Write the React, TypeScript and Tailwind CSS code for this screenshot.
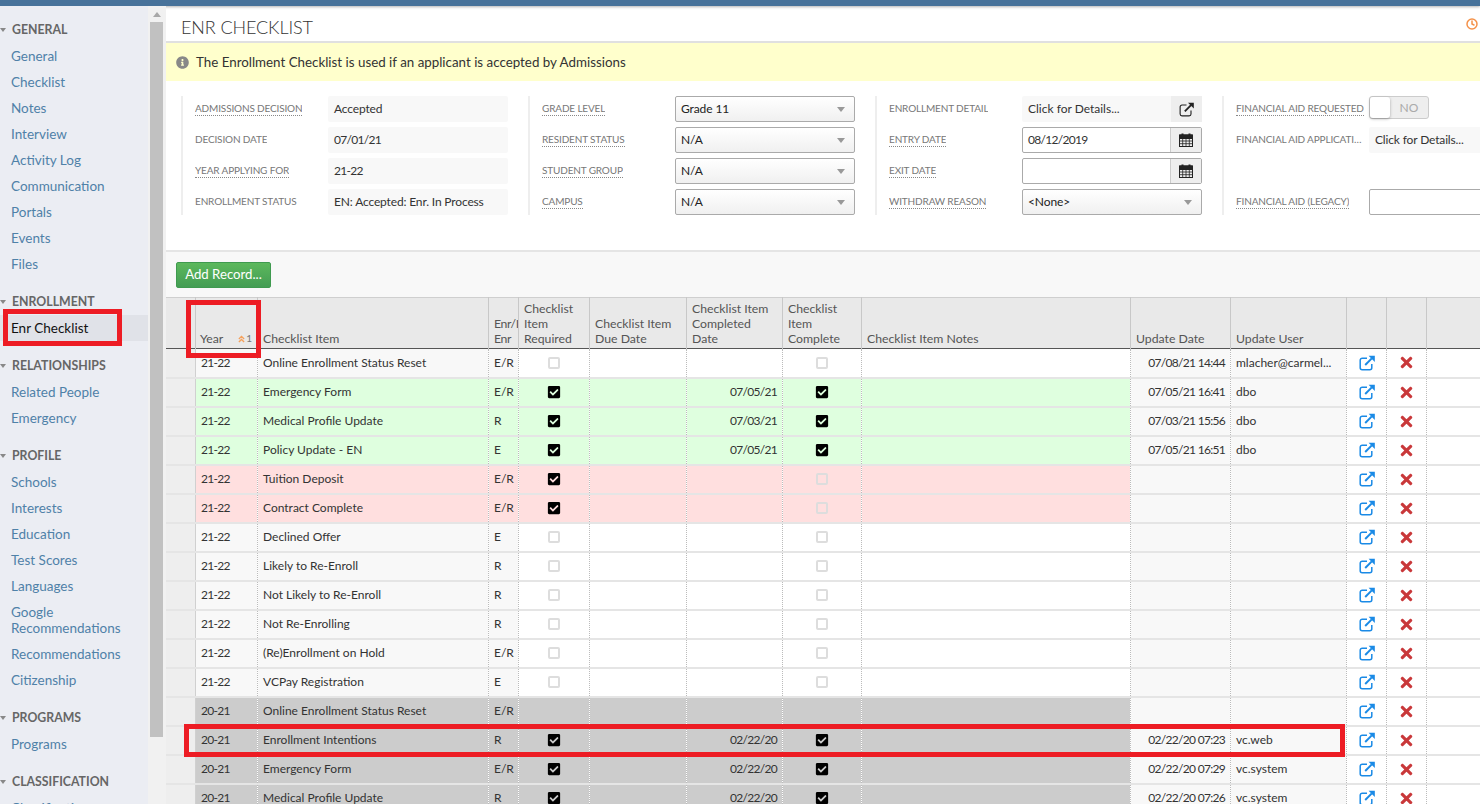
import { FaCheckSquare, FaInfoCircle, FaTimes } from "react-icons/fa";
import { Clock } from "lucide-react";

const font = "font-['Lato','Noto_Sans',sans-serif]";

const groups: { title: string; items: string[] }[] = [
  { title: "GENERAL", items: ["General", "Checklist", "Notes", "Interview", "Activity Log", "Communication", "Portals", "Events", "Files"] },
  { title: "ENROLLMENT", items: ["Enr Checklist"] },
  { title: "RELATIONSHIPS", items: ["Related People", "Emergency"] },
  { title: "PROFILE", items: ["Schools", "Interests", "Education", "Test Scores", "Languages", "Google Recommendations", "Recommendations", "Citizenship"] },
  { title: "PROGRAMS", items: ["Programs"] },
  { title: "CLASSIFICATION", items: ["Classification"] },
];

type Row = { y: string; item: string; e: string; req: 0 | 1 | 2; cd: string; comp: 0 | 1 | 2; ud: string; uu: string; bg: string };
const W = "bg-white", G = "bg-[#dfffdf]", R = "bg-[#ffdfdf]", D = "bg-[#cccccc]";
const rows: Row[] = [
  { y: "21-22", item: "Online Enrollment Status Reset", e: "E/R", req: 1, cd: "", comp: 1, ud: "07/08/21 14:44", uu: "mlacher@carmel...", bg: W },
  { y: "21-22", item: "Emergency Form", e: "E/R", req: 2, cd: "07/05/21", comp: 2, ud: "07/05/21 16:41", uu: "dbo", bg: G },
  { y: "21-22", item: "Medical Profile Update", e: "R", req: 2, cd: "07/03/21", comp: 2, ud: "07/03/21 15:56", uu: "dbo", bg: G },
  { y: "21-22", item: "Policy Update - EN", e: "E", req: 2, cd: "07/05/21", comp: 2, ud: "07/05/21 16:51", uu: "dbo", bg: G },
  { y: "21-22", item: "Tuition Deposit", e: "E/R", req: 2, cd: "", comp: 1, ud: "", uu: "", bg: R },
  { y: "21-22", item: "Contract Complete", e: "E/R", req: 2, cd: "", comp: 1, ud: "", uu: "", bg: R },
  { y: "21-22", item: "Declined Offer", e: "E", req: 1, cd: "", comp: 1, ud: "", uu: "", bg: W },
  { y: "21-22", item: "Likely to Re-Enroll", e: "R", req: 1, cd: "", comp: 1, ud: "", uu: "", bg: W },
  { y: "21-22", item: "Not Likely to Re-Enroll", e: "R", req: 1, cd: "", comp: 1, ud: "", uu: "", bg: W },
  { y: "21-22", item: "Not Re-Enrolling", e: "R", req: 1, cd: "", comp: 1, ud: "", uu: "", bg: W },
  { y: "21-22", item: "(Re)Enrollment on Hold", e: "E/R", req: 1, cd: "", comp: 1, ud: "", uu: "", bg: W },
  { y: "21-22", item: "VCPay Registration", e: "E", req: 1, cd: "", comp: 1, ud: "", uu: "", bg: W },
  { y: "20-21", item: "Online Enrollment Status Reset", e: "E/R", req: 0, cd: "", comp: 0, ud: "", uu: "", bg: D },
  { y: "20-21", item: "Enrollment Intentions", e: "R", req: 2, cd: "02/22/20", comp: 2, ud: "02/22/20 07:23", uu: "vc.web", bg: D },
  { y: "20-21", item: "Emergency Form", e: "E/R", req: 2, cd: "02/22/20", comp: 2, ud: "02/22/20 07:29", uu: "vc.system", bg: D },
  { y: "20-21", item: "Medical Profile Update", e: "R", req: 2, cd: "02/22/20", comp: 2, ud: "02/22/20 07:26", uu: "vc.system", bg: D },
];

function ExtIcon({ className, box = 1.5 }: { className: string; box?: number }) {
  return (
    <svg viewBox="0 0 16 16" className={className} fill="none" stroke="currentColor">
      <path d="M8 3.2H3.2A2 2 0 0 0 1.2 5.2v7.6a2 2 0 0 0 2 2h7.6a2 2 0 0 0 2-2V9" strokeWidth={box} />
      <path d="M6.2 10 12.8 3.4" strokeWidth={2} />
      <path d="M9.6 0.8H15.8V7Z" fill="currentColor" stroke="none" />
    </svg>
  );
}

function CalIcon() {
  return (
    <svg viewBox="0 0 14 14" className="h-[14px] w-[14px] text-[#222]" fill="none" stroke="currentColor">
      <path d="M0.5 2h13v3.5H0.5Z" fill="currentColor" strokeWidth={1} />
      <rect x="0.5" y="2" width="13" height="11.5" strokeWidth={1} />
      <path d="M0.5 8h13M0.5 10.7h13M3.7 5v8.5M7 5v8.5M10.3 5v8.5" strokeWidth={0.8} />
      <path d="M3.5 0.5v2.5M10.5 0.5v2.5" strokeWidth={2} />
    </svg>
  );
}

function Caret() {
  return <span className="h-0 w-0 border-x-[4.5px] border-t-[5px] border-x-transparent border-t-[#999]" />;
}

function Check({ v }: { v: 0 | 1 | 2 }) {
  if (v === 0) return null;
  if (v === 2) return <FaCheckSquare className="mx-auto text-[14px] text-black" />;
  return <span className="mx-auto block h-[12px] w-[12px] rounded-[2px] border-2 border-[#dddddd]" />;
}

function Label({ text, dotted }: { text: string; dotted?: boolean }) {
  return (
    <div className="flex w-[133px] shrink-0 items-center pb-[2px]">
      <span className={`max-w-[129px] truncate text-[10px] leading-[14px] tracking-[-0.15px] text-[#777] ${dotted ? "border-b border-dotted border-[#888]" : ""}`}>{text}</span>
    </div>
  );
}

function ReadOnly({ text, digits }: { text: string; digits?: boolean }) {
  return <div className={`flex h-[26px] w-[180px] shrink-0 items-center rounded-[2px] bg-[#f8f8f8] px-[6px] text-[12px] text-[#333] ${digits ? "tracking-[-0.7px]" : "tracking-[-0.15px]"}`}>{text}</div>;
}

function Select({ text }: { text: string }) {
  return (
    <div className="flex h-[26px] w-[180px] shrink-0 items-center justify-between rounded-[2px] border border-[#aaa] bg-gradient-to-b from-white to-[#f0f0f0] pl-[5px] pr-[9px] text-[12px] tracking-[-0.1px] text-[#222]">
      <span>{text}</span>
      <Caret />
    </div>
  );
}

function DateBox({ text }: { text: string }) {
  return (
    <div className="flex h-[26px] w-[180px] shrink-0 items-center rounded-[2px] border border-[#aaa] bg-white text-[12px] tracking-[-0.7px] text-[#333]">
      <span className="flex-1 pl-[5px]">{text}</span>
      <span className="flex h-full w-[31px] items-center justify-center border-l border-[#ccc] bg-[#eeeeee]">
        <CalIcon />
      </span>
    </div>
  );
}

function Column({ children }: { children: React.ReactNode }) {
  return <div className="flex w-[327px] shrink-0 flex-col gap-[5px] border-l-2 border-[#eeeeee] pl-[12px]">{children}</div>;
}

function FormRow({ children }: { children: React.ReactNode }) {
  return <div className="flex h-[26px]">{children}</div>;
}

const cols = [29.5, 62, 231, 30, 71, 97, 96, 79, 269, 100, 116, 40, 40, 53.5];

function Th({ children, className = "" }: { children?: React.ReactNode; className?: string }) {
  return <th className={`border-r border-[#c8c8c8] px-[5px] pb-[2px] align-bottom text-left text-[12.25px] font-normal leading-[15px] text-[#555] ${className}`}>{children}</th>;
}

const td = "border-r border-dotted border-[#bbb] px-[5px] text-[12px] text-[#333] whitespace-nowrap overflow-hidden";
const digits = "tracking-[-0.7px]";

export default function App() {
  return (
    <div className={`${font} relative h-[804px] w-[1480px] overflow-hidden bg-white`}>
      <div className="h-[6px] bg-[#47729a] shadow-[0_1px_3px_rgba(0,0,0,0.3)]" />
      <div className="flex h-[798px]">
        <aside className="h-full w-[148px] shrink-0 overflow-hidden bg-[#ebedf3] pt-[16px]">
          {groups.map((g) => (
            <div key={g.title} className="mb-[17px]">
              <div className="flex h-[16px] items-center text-[12.3px] font-bold leading-[16px] text-[#666]">
                <span className="mr-[6px] h-0 w-0 border-x-[3.5px] border-t-[4px] border-x-transparent border-t-[#888]" />
                <span>{g.title}</span>
              </div>
              <div className="mt-[5px]">
                {g.items.map((it) => {
                  const active = it === "Enr Checklist";
                  return (
                    <div key={it} className={`py-[5px] pl-[11px] pr-[6px] text-[13.5px] leading-[16px] ${active ? "bg-[#e0e2e8] text-[#111]" : "text-[#4f81a8]"}`}>
                      {it}
                    </div>
                  );
                })}
              </div>
            </div>
          ))}
        </aside>
        <div className="flex h-full w-[18px] shrink-0 flex-col bg-[#f1f1f1] pr-[3px] pl-[2px]">
          <div className="flex h-[16px] items-center justify-center">
            <span className="h-0 w-0 border-x-[4px] border-b-[5px] border-x-transparent border-b-[#a8a8a8]" />
          </div>
          <div className="h-[715px] bg-[#c1c1c1]" />
        </div>
        <main className="flex h-full min-w-0 flex-1 flex-col overflow-hidden">
          <div className="relative flex h-[35px] shrink-0 items-center pl-[15px] pt-[8px] text-[18px] font-light tracking-[-0.1px] text-[#333]">
            ENR CHECKLIST
            <Clock className="absolute right-[2px] top-[12px] h-[12px] w-[12px] text-[#f5924a]" strokeWidth={3} />
          </div>
          <div className="h-[2px] shrink-0 bg-[#e0e0e0]" />
          <div className="flex h-[38px] shrink-0 items-center gap-[7px] bg-[#ffffcc] pl-[10px] pt-[1px] text-[13.35px] text-[#333]">
            <FaInfoCircle className="text-[13px] text-[#888]" />
            <span>The Enrollment Checklist is used if an applicant is accepted by Admissions</span>
          </div>
          <div className="flex h-[169px] shrink-0 items-start gap-[20px] overflow-hidden pl-[15px] pt-[15px]">
            <Column>
              <FormRow><Label text="ADMISSIONS DECISION" dotted /><ReadOnly text="Accepted" /></FormRow>
              <FormRow><Label text="DECISION DATE" /><ReadOnly text="07/01/21" digits /></FormRow>
              <FormRow><Label text="YEAR APPLYING FOR" dotted /><ReadOnly text="21-22" digits /></FormRow>
              <FormRow><Label text="ENROLLMENT STATUS" /><ReadOnly text="EN: Accepted: Enr. In Process" /></FormRow>
            </Column>
            <Column>
              <FormRow><Label text="GRADE LEVEL" dotted /><Select text="Grade 11" /></FormRow>
              <FormRow><Label text="RESIDENT STATUS" dotted /><Select text="N/A" /></FormRow>
              <FormRow><Label text="STUDENT GROUP" dotted /><Select text="N/A" /></FormRow>
              <FormRow><Label text="CAMPUS" dotted /><Select text="N/A" /></FormRow>
            </Column>
            <Column>
              <FormRow>
                <Label text="ENROLLMENT DETAIL" />
                <div className="flex h-[26px] w-[180px] shrink-0 items-center rounded-[2px] bg-[#f8f8f8] text-[12px] text-[#333]">
                  <span className="flex-1 pl-[6px]">Click for Details...</span>
                  <span className="flex h-full w-[31px] items-center justify-center bg-[#eeeeee]">
                    <ExtIcon className="h-[15px] w-[15px] text-[#222]" box={1.2} />
                  </span>
                </div>
              </FormRow>
              <FormRow><Label text="ENTRY DATE" dotted /><DateBox text="08/12/2019" /></FormRow>
              <FormRow><Label text="EXIT DATE" dotted /><DateBox text="" /></FormRow>
              <FormRow><Label text="WITHDRAW REASON" dotted /><Select text="<None>" /></FormRow>
            </Column>
            <Column>
              <FormRow>
                <Label text="FINANCIAL AID REQUESTED" dotted />
                <div className="flex h-[23px] w-[60px] shrink-0 rounded-[3px] border border-[#ccc] bg-[#eeeeee]">
                  <span className="h-full w-[20px] rounded-[3px] bg-white shadow-[0_1px_3px_rgba(0,0,0,0.3)]" />
                  <span className="flex-1 text-center text-[12px] leading-[21px] text-[#aaa]">NO</span>
                </div>
              </FormRow>
              <FormRow><Label text="FINANCIAL AID APPLICATION" /><ReadOnly text="Click for Details..." /></FormRow>
              <FormRow><span /></FormRow>
              <FormRow>
                <Label text="FINANCIAL AID (LEGACY)" dotted />
                <div className="h-[26px] w-[180px] shrink-0 rounded-[2px] border border-[#aaa] bg-white" />
              </FormRow>
            </Column>
          </div>
          <div className="h-[2px] shrink-0 bg-[#e5e5e5]" />
          <div className="flex h-[45px] shrink-0 items-start bg-[#f8f8f8] pl-[10px] pt-[10px]">
            <button className="h-[26px] w-[95px] rounded-[2px] border border-[#3f9a4f] bg-gradient-to-b from-[#5cb85c] to-[#449d54] text-[13.2px] text-white">Add Record...</button>
          </div>
          <table className="w-[1314px] shrink-0 table-fixed border-collapse">
            <colgroup>
              {cols.map((c, i) => (
                <col key={i} style={{ width: c }} />
              ))}
            </colgroup>
            <thead>
              <tr className="h-[51px] border-y border-t-[#cfcfcf] border-b-[#555] bg-[#e9e9e9]">
                <Th />
                <Th className="pl-[4px]">
                  <div className="flex items-end justify-between">
                    <span>Year</span>
                    <span className="flex items-center pb-[1px] text-[10px] leading-[13px] text-[#777]">
                      <svg viewBox="0 0 8 8" className="mr-[1px] h-[8px] w-[7px] text-[#f5a15c]" fill="none" stroke="currentColor" strokeWidth={1.5}>
                        <path d="M1 4 4 1l3 3M1 7.5l3-3 3 3" />
                      </svg>
                      1
                    </span>
                  </div>
                </Th>
                <Th>Checklist Item</Th>
                <Th className="whitespace-nowrap overflow-hidden tracking-[-0.4px]">Enr/I<br />Enr</Th>
                <Th>Checklist Item Required</Th>
                <Th>Checklist Item Due Date</Th>
                <Th>Checklist Item Completed Date</Th>
                <Th>Checklist Item Complete</Th>
                <Th>Checklist Item Notes</Th>
                <Th>Update Date</Th>
                <Th>Update User</Th>
                <Th />
                <Th />
                <Th className="border-r-0" />
              </tr>
            </thead>
            <tbody>
              {rows.map((r, i) => {
                const left = r.bg === W ? "bg-[#f8f8f8]" : r.bg;
                return (
                  <tr key={i} className="h-[29px] border-b-2 border-[#e5e5e5]">
                    <td className="border-r border-[#d0d0d0] bg-[#eeeeee]" />
                    <td className={`${td} ${left} ${digits}`}>{r.y}</td>
                    <td className={`${td} ${left}`}>{r.item}</td>
                    <td className={`${td} ${left}`}>{r.e}</td>
                    <td className={`${td} ${r.bg}`}><Check v={r.req} /></td>
                    <td className={`${td} ${r.bg}`} />
                    <td className={`${td} ${r.bg} ${digits} text-right`}>{r.cd}</td>
                    <td className={`${td} ${r.bg}`}><Check v={r.comp} /></td>
                    <td className={`${td} ${r.bg}`} />
                    <td className={`${td} bg-[#f8f8f8] ${digits} text-right`}>{r.ud}</td>
                    <td className={`${td} bg-[#f8f8f8]`}>{r.uu}</td>
                    <td className={`${td} bg-white`}><ExtIcon className="mx-auto h-[16px] w-[16px] text-[#1a8ae6]" /></td>
                    <td className={`${td} bg-white`}><FaTimes className="mx-auto text-[17px] text-[#c9383a]" /></td>
                    <td className="bg-white" />
                  </tr>
                );
              })}
            </tbody>
          </table>
        </main>
      </div>
      <div className="pointer-events-none absolute left-[3px] top-[309px] h-[37px] w-[119px] border-[5px] border-[#ed1c24]" />
      <div className="pointer-events-none absolute left-[186px] top-[300px] h-[58px] w-[75px] border-[5px] border-[#ed1c24]" />
      <div className="pointer-events-none absolute left-[184px] top-[724px] h-[33px] w-[1161px] border-[5px] border-[#ed1c24]" />
    </div>
  );
}
